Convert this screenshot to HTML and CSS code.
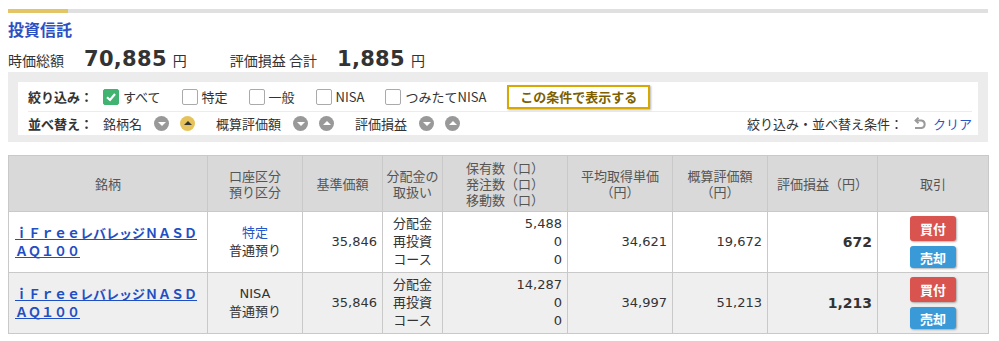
FILE: index.html
```html
<!DOCTYPE html>
<html lang="ja">
<head>
    <meta charset="UTF-8">
    <title>投資信託</title>
    <link rel="stylesheet" href="styles.css">
</head>
<body>
    <div class="page">
        <!-- タブ下のバー -->
        <div class="tab-bar"><span class="tab-bar-active"></span></div>

        <h2 class="section-title">投資信託</h2>

        <!-- 合計 -->
        <div class="summary">
            <span class="summary-label">時価総額</span>
            <span class="summary-value">70,885</span>
            <span class="summary-unit">円</span>
            <span class="summary-label summary-label-2">評価損益 合計</span>
            <span class="summary-value">1,885</span>
            <span class="summary-unit">円</span>
        </div>

        <!-- 絞り込み・並べ替え -->
        <div class="filter-panel">
            <div class="filter-box">
                <div class="filter-row">
                    <span class="row-label">絞り込み：</span>
                    <label class="check-item"><span class="check checked"><svg width="12" height="12" viewBox="0 0 12 12"><path d="M2 6.2 L5 9 L10 3" fill="none" stroke="#fff" stroke-width="2.2"/></svg></span>すべて</label>
                    <label class="check-item"><span class="check"></span>特定</label>
                    <label class="check-item"><span class="check"></span>一般</label>
                    <label class="check-item"><span class="check"></span>NISA</label>
                    <label class="check-item"><span class="check"></span>つみたてNISA</label>
                    <button class="apply-btn">この条件で表示する</button>
                </div>
                <div class="sort-row">
                    <span class="row-label">並べ替え：</span>
                    <span class="sort-item">銘柄名
                        <span class="sort-btn"><i class="tri-down"></i></span>
                        <span class="sort-btn active"><i class="tri-up"></i></span>
                    </span>
                    <span class="sort-item">概算評価額
                        <span class="sort-btn"><i class="tri-down"></i></span>
                        <span class="sort-btn"><i class="tri-up"></i></span>
                    </span>
                    <span class="sort-item">評価損益
                        <span class="sort-btn"><i class="tri-down"></i></span>
                        <span class="sort-btn"><i class="tri-up"></i></span>
                    </span>
                    <span class="clear-area">絞り込み・並べ替え条件：
                        <svg class="undo-icon" width="14" height="13" viewBox="0 0 14 13"><path d="M3 3.5 H8.5 A3.8 3.8 0 0 1 8.5 11 H2" fill="none" stroke="#9a9a9a" stroke-width="2"/><path d="M5.5 0.8 L2.6 3.5 L5.5 6.2" fill="none" stroke="#9a9a9a" stroke-width="2"/></svg>
                        <a class="clear-link" href="#">クリア</a>
                    </span>
                </div>
            </div>
        </div>

        <!-- 保有一覧 -->
        <table class="fund-table">
            <colgroup>
                <col style="width:199px"><col style="width:95px"><col style="width:80px">
                <col style="width:60px"><col style="width:125px"><col style="width:105px">
                <col style="width:95px"><col style="width:110px"><col style="width:111px">
            </colgroup>
            <thead>
                <tr>
                    <th>銘柄</th>
                    <th>口座区分<br>預り区分</th>
                    <th>基準価額</th>
                    <th>分配金の<br>取扱い</th>
                    <th>保有数（口）<br>発注数（口）<br>移動数（口）</th>
                    <th>平均取得単価<br>（円）</th>
                    <th>概算評価額<br>（円）</th>
                    <th>評価損益（円）</th>
                    <th>取引</th>
                </tr>
            </thead>
            <tbody>
                <tr>
                    <td class="name"><a href="#">ｉＦｒｅｅレバレッジＮＡＳＤＡＱ１００</a></td>
                    <td class="center"><span class="acct">特定</span><br>普通預り</td>
                    <td class="num">35,846</td>
                    <td class="center">分配金<br>再投資<br>コース</td>
                    <td class="num">5,488<br>0<br>0</td>
                    <td class="num">34,621</td>
                    <td class="num">19,672</td>
                    <td class="num bold">672</td>
                    <td class="center trade">
                        <button class="buy-btn">買付</button>
                        <button class="sell-btn">売却</button>
                    </td>
                </tr>
                <tr class="alt">
                    <td class="name"><a href="#">ｉＦｒｅｅレバレッジＮＡＳＤＡＱ１００</a></td>
                    <td class="center">NISA<br>普通預り</td>
                    <td class="num">35,846</td>
                    <td class="center">分配金<br>再投資<br>コース</td>
                    <td class="num">14,287<br>0<br>0</td>
                    <td class="num">34,997</td>
                    <td class="num">51,213</td>
                    <td class="num bold">1,213</td>
                    <td class="center trade">
                        <button class="buy-btn">買付</button>
                        <button class="sell-btn">売却</button>
                    </td>
                </tr>
            </tbody>
        </table>
    </div>
</body>
</html>
```

FILE: styles.css
```css
* {
    margin: 0;
    padding: 0;
    box-sizing: border-box;
}

body {
    background: #fff;
    color: #333;
    font-family: "DejaVu Sans", "Noto Sans CJK JP", sans-serif;
    font-size: 13px;
}

.page {
    width: 980px;
    margin-left: 8px;
    padding-top: 9px;
}

/* タブ下のバー */
.tab-bar {
    height: 4px;
    background: #e0e0e0;
    display: flex;
}

.tab-bar-active {
    width: 60px;
    background: #e3c565;
}

.section-title {
    margin-top: 6px;
    font-family: "Noto Sans CJK JP", sans-serif;
    font-size: 16px;
    font-weight: bold;
    color: #2b50c4;
    line-height: 20px;
}

/* 合計 */
.summary {
    display: flex;
    align-items: baseline;
    height: 24px;
    margin-top: 8px;
}

.summary-label {
    font-family: "Noto Sans CJK JP", sans-serif;
    font-size: 14px;
    margin-right: 20px;
}

.summary-label-2 {
    margin-left: 43px;
}

.summary-value {
    font-size: 21px;
    font-weight: bold;
    letter-spacing: 0.3px;
    margin-right: 6px;
}

.summary-unit {
    font-family: "Noto Sans CJK JP", sans-serif;
    font-size: 14px;
}

/* 絞り込み・並べ替え */
.filter-panel {
    background: #ececec;
    padding: 10px 10px 7px;
    margin-top: 1px;
}

.filter-box {
    background: #fff;
    padding: 0 6px 0 10px;
}

.filter-row {
    display: flex;
    align-items: center;
    height: 30px;
    border-bottom: 1px solid #ececec;
}

.sort-row {
    display: flex;
    align-items: center;
    height: 23px;
}

.row-label {
    font-family: "Noto Sans CJK JP", sans-serif;
    font-weight: bold;
    width: 75px;
}

.check-item {
    display: flex;
    align-items: center;
    margin-right: 21px;
    font-family: "Noto Sans CJK JP", sans-serif;
}

.check {
    width: 16px;
    height: 16px;
    border: 1px solid #aaa;
    border-radius: 2px;
    background: #fff;
    margin-right: 4px;
    display: flex;
    align-items: center;
    justify-content: center;
}

.check.checked {
    background: #3fb36f;
    border-color: #3fb36f;
}

.apply-btn {
    margin-left: 0;
    height: 24px;
    padding: 0 11px;
    border: 2px solid #d6a800;
    background: #fff;
    color: #7d5f00;
    font-family: "Noto Sans CJK JP", sans-serif;
    font-size: 13px;
    font-weight: bold;
    box-shadow: 1px 1px 2px rgba(0, 0, 0, 0.3);
}

.sort-item {
    display: flex;
    align-items: center;
    gap: 11px;
    margin-right: 21px;
    font-family: "Noto Sans CJK JP", sans-serif;
}

.sort-item .sort-btn:first-of-type {
    margin-left: 1px;
}

.sort-btn {
    width: 15px;
    height: 15px;
    border-radius: 50%;
    background: #999;
    display: flex;
    align-items: center;
    justify-content: center;
}

.sort-btn.active {
    background: #e6c35a;
}

.tri-down {
    border-left: 4px solid transparent;
    border-right: 4px solid transparent;
    border-top: 4px solid #fff;
    margin-top: 1px;
}

.tri-up {
    border-left: 4px solid transparent;
    border-right: 4px solid transparent;
    border-bottom: 4px solid #fff;
    margin-top: -1px;
}

.sort-btn.active .tri-up {
    border-bottom-color: #333;
}

.clear-area {
    margin-left: auto;
    display: flex;
    align-items: center;
    font-family: "Noto Sans CJK JP", sans-serif;
}

.undo-icon {
    margin: 0 6px 0 10px;
}

.clear-link {
    color: #2456c8;
    text-decoration: none;
}

/* 保有一覧 */
.fund-table {
    width: 980px;
    margin-top: 13px;
    border-collapse: collapse;
    table-layout: fixed;
}

.fund-table th,
.fund-table td {
    border: 1px solid #c9c9c9;
}

.fund-table th {
    background: #d9d9d9;
    color: #555;
    font-family: "Noto Sans CJK JP", sans-serif;
    font-weight: normal;
    font-size: 13px;
    line-height: 16px;
    height: 56px;
    text-align: center;
}

.fund-table td {
    height: 61px;
    line-height: 18px;
    vertical-align: middle;
    padding: 0 5px;
}

.fund-table tr.alt td {
    background: #efefef;
}

.fund-table td.name {
    padding-left: 6px;
    font-family: "Noto Sans CJK JP", sans-serif;
    font-weight: bold;
}

.fund-table td.name a {
    color: #1f4fc4;
}

.fund-table td.center {
    text-align: center;
    font-family: "DejaVu Sans", "Noto Sans CJK JP", sans-serif;
}

.acct {
    color: #2456c8;
}

.fund-table td.num {
    text-align: right;
}

.fund-table td.bold {
    font-weight: bold;
    font-size: 14px;
}

.fund-table td.trade {
    padding: 0;
}

.buy-btn,
.sell-btn {
    display: block;
    width: 46px;
    margin: 0 auto;
    border: none;
    border-radius: 3px;
    color: #fff;
    font-family: "Noto Sans CJK JP", sans-serif;
    font-size: 13px;
    font-weight: bold;
    box-shadow: 1px 1px 2px rgba(0, 0, 0, 0.3);
}

.buy-btn {
    height: 25px;
    background: #d9534f;
}

.sell-btn {
    height: 22px;
    margin-top: 5px;
    background: #3a9ad8;
}
```
